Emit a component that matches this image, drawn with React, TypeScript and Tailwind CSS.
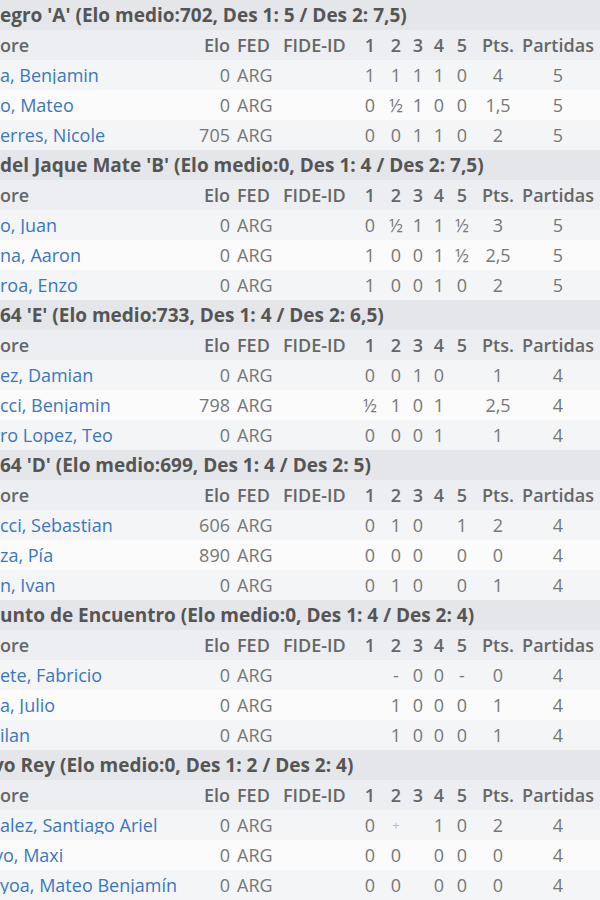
type Player = {
  name: string;
  elo: string;
  rounds: string[];
  pts: string;
  games: string;
};

type Group = {
  title: string;
  players: Player[];
};

const groups: Group[] = [
  {
    title: "egro 'A' (Elo medio:702, Des 1: 5 / Des 2: 7,5)",
    players: [
      { name: "a, Benjamin", elo: "0", rounds: ["1", "1", "1", "1", "0"], pts: "4", games: "5" },
      { name: "o, Mateo", elo: "0", rounds: ["0", "½", "1", "0", "0"], pts: "1,5", games: "5" },
      { name: "erres, Nicole", elo: "705", rounds: ["0", "0", "1", "1", "0"], pts: "2", games: "5" },
    ],
  },
  {
    title: "del Jaque Mate 'B' (Elo medio:0, Des 1: 4 / Des 2: 7,5)",
    players: [
      { name: "o, Juan", elo: "0", rounds: ["0", "½", "1", "1", "½"], pts: "3", games: "5" },
      { name: "na, Aaron", elo: "0", rounds: ["1", "0", "0", "1", "½"], pts: "2,5", games: "5" },
      { name: "roa, Enzo", elo: "0", rounds: ["1", "0", "0", "1", "0"], pts: "2", games: "5" },
    ],
  },
  {
    title: "64 'E' (Elo medio:733, Des 1: 4 / Des 2: 6,5)",
    players: [
      { name: "ez, Damian", elo: "0", rounds: ["0", "0", "1", "0", ""], pts: "1", games: "4" },
      { name: "cci, Benjamin", elo: "798", rounds: ["½", "1", "0", "1", ""], pts: "2,5", games: "4" },
      { name: "ro Lopez, Teo", elo: "0", rounds: ["0", "0", "0", "1", ""], pts: "1", games: "4" },
    ],
  },
  {
    title: "64 'D' (Elo medio:699, Des 1: 4 / Des 2: 5)",
    players: [
      { name: "cci, Sebastian", elo: "606", rounds: ["0", "1", "0", "", "1"], pts: "2", games: "4" },
      { name: "za, Pía", elo: "890", rounds: ["0", "0", "0", "", "0"], pts: "0", games: "4" },
      { name: "n, Ivan", elo: "0", rounds: ["0", "1", "0", "", "0"], pts: "1", games: "4" },
    ],
  },
  {
    title: "unto de Encuentro (Elo medio:0, Des 1: 4 / Des 2: 4)",
    players: [
      { name: "ete, Fabricio", elo: "0", rounds: ["", "-", "0", "0", "-"], pts: "0", games: "4" },
      { name: "a, Julio", elo: "0", rounds: ["", "1", "0", "0", "0"], pts: "1", games: "4" },
      { name: "ilan", elo: "0", rounds: ["", "1", "0", "0", "0"], pts: "1", games: "4" },
    ],
  },
  {
    title: "vo Rey (Elo medio:0, Des 1: 2 / Des 2: 4)",
    players: [
      { name: "alez, Santiago Ariel", elo: "0", rounds: ["0", "+", "", "1", "0"], pts: "2", games: "4" },
      { name: "vo, Maxi", elo: "0", rounds: ["0", "0", "", "0", "0"], pts: "0", games: "4" },
      { name: "yoa, Mateo Benjamín", elo: "0", rounds: ["0", "0", "", "0", "0"], pts: "0", games: "4" },
    ],
  },
];

// name | Elo | FED | FIDE-ID | 1..5 | Pts. | Partidas
const cols =
  "grid grid-cols-[190px_42px_46px_78px_28px_24px_20px_22px_24px_48px_72px] pr-[6px] h-[30px] items-center";

function GroupBlock({ group }: { group: Group }) {
  return (
    <div>
      <div className="h-[30px] flex items-center bg-[#e4e6ea] font-bold text-[19px] text-[#555] whitespace-nowrap overflow-hidden">
        <span className={group.title.startsWith("vo") ? "-ml-[7px]" : ""}>{group.title}</span>
      </div>

      <div className={cols + " bg-[#eceef2] font-semibold text-[#666]"}>
        <div className="overflow-hidden whitespace-nowrap">ore</div>
        <div className="text-right pr-[2px]">Elo</div>
        <div className="pl-[5px]">FED</div>
        <div className="pl-[5px]">FIDE-ID</div>
        <div className="text-center">1</div>
        <div className="text-center">2</div>
        <div className="text-center">3</div>
        <div className="text-center">4</div>
        <div className="text-center">5</div>
        <div className="text-center">Pts.</div>
        <div className="text-center">Partidas</div>
      </div>

      {group.players.map((p, i) => (
        <div
          key={p.name}
          className={cols + " text-[#777] " + (i % 2 === 0 ? "bg-[#f4f5f7]" : "bg-[#fbfbfc]")}
        >
          <div className="overflow-hidden whitespace-nowrap text-[#3a77c2]">
            <span className={p.name.startsWith("vo") ? "-ml-[6px]" : ""}>{p.name}</span>
          </div>
          <div className="text-right pr-[2px]">{p.elo}</div>
          <div className="pl-[5px]">ARG</div>
          <div></div>
          {p.rounds.map((r, j) => (
            <div key={j} className={"text-center " + (r === "+" ? "text-[#bbb] text-[13px]" : "")}>
              {r}
            </div>
          ))}
          <div className="text-center">{p.pts}</div>
          <div className="text-center">{p.games}</div>
        </div>
      ))}
    </div>
  );
}

export default function App() {
  return (
    <div className="w-[600px] h-[900px] overflow-hidden bg-white text-[18px] leading-none font-['Open_Sans',sans-serif]">
      {groups.map((g) => (
        <GroupBlock key={g.title} group={g} />
      ))}
    </div>
  );
}
